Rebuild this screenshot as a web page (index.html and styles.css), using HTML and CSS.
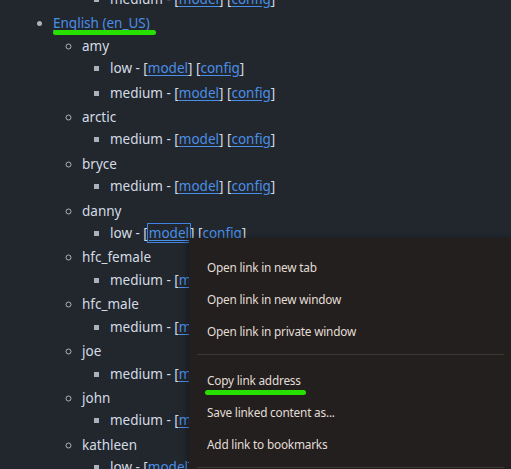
FILE: index.html
```html
<!DOCTYPE html>
<html>
<head>
<meta charset="utf-8">
<link rel="stylesheet" href="styles.css">
</head>
<body>
<div class="page">
  <ul class="l1">
    <li class="wrap">
      <ul class="l2">
        <li class="wrap">
          <ul class="l3">
            <li>medium - [<a href="#">model</a>] [<a href="#">config</a>]</li>
          </ul>
        </li>
      </ul>
    </li>
    <li><span class="mark"><a href="#">English (en_US)</a><span class="hl hl-lang"></span></span>
      <ul class="l2">
        <li>amy
          <ul class="l3">
            <li>low - [<a href="#">model</a>] [<a href="#">config</a>]</li>
            <li>medium - [<a href="#">model</a>] [<a href="#">config</a>]</li>
          </ul>
        </li>
        <li>arctic
          <ul class="l3">
            <li>medium - [<a href="#">model</a>] [<a href="#">config</a>]</li>
          </ul>
        </li>
        <li>bryce
          <ul class="l3">
            <li>medium - [<a href="#">model</a>] [<a href="#">config</a>]</li>
          </ul>
        </li>
        <li>danny
          <ul class="l3">
            <li>low - [<a href="#" class="focus">model</a>] [<a href="#">config</a>]</li>
          </ul>
        </li>
        <li>hfc_female
          <ul class="l3">
            <li>medium - [<a href="#">model</a>] [<a href="#">config</a>]</li>
          </ul>
        </li>
        <li>hfc_male
          <ul class="l3">
            <li>medium - [<a href="#">model</a>] [<a href="#">config</a>]</li>
          </ul>
        </li>
        <li>joe
          <ul class="l3">
            <li>medium - [<a href="#">model</a>] [<a href="#">config</a>]</li>
          </ul>
        </li>
        <li>john
          <ul class="l3">
            <li>medium - [<a href="#">model</a>] [<a href="#">config</a>]</li>
          </ul>
        </li>
        <li>kathleen
          <ul class="l3">
            <li>low - [<a href="#">model</a>] [<a href="#">config</a>]</li>
          </ul>
        </li>
      </ul>
    </li>
  </ul>

  <div class="menu">
    <div class="item">Open link in new tab</div>
    <div class="item">Open link in new window</div>
    <div class="item">Open link in private window</div>
    <div class="sep"></div>
    <div class="item"><span class="mark">Copy link address<span class="hl hl-copy"></span></span></div>
    <div class="item">Save linked content as...</div>
    <div class="item">Add link to bookmarks</div>
    <div class="sep"></div>
  </div>
</div>
</body>
</html>
```

FILE: styles.css
```css
html, body {
  margin: 0;
  padding: 0;
  background: #22272e;
  overflow: hidden;
}
body {
  width: 511px;
  height: 469px;
  font-family: "Noto Sans", "Open Sans", sans-serif;
  font-size: 13.5px;
  color: #d3dbe4;
}
.page {
  position: relative;
  width: 511px;
  height: 469px;
  overflow: hidden;
}
ul {
  margin: 0;
  padding-left: 29px;
}
.l1 {
  margin-top: -12px;
  padding-left: 53px;
  list-style: disc;
}
.l2 { list-style: circle; padding-left: 29px; }
.l3 { list-style: square; padding-left: 28px; }
li {
  line-height: 22.4px;
}
li + li { margin-top: 2px; }
li::marker { color: #aab3bd; }
li.wrap { list-style: none; }
a {
  color: #4a8fe7;
  text-decoration: underline;
  text-underline-offset: 2px;
}
.focus {
  outline: 1px solid #3f84e0;
  outline-offset: 0;
  padding: 0 1px;
}
.mark {
  position: relative;
}
.hl {
  position: absolute;
  height: 4.5px;
  border-radius: 2.5px;
  background: #27e000;
}
.hl-lang { left: 0; right: -6px; top: 16px; }
.hl-copy { left: -2px; right: -5px; top: 18px; }

.menu {
  position: absolute;
  left: 189px;
  top: 238px;
  width: 323px;
  height: 260px;
  background: #221f1e;
  padding-top: 13px;
  box-sizing: border-box;
  font-size: 11.8px;
  letter-spacing: -0.2px;
  color: #e2ddd6;
  box-shadow: -2px 0 6px rgba(0,0,0,0.35);
}
.item {
  height: 32px;
  line-height: 32px;
  padding-left: 18px;
}
.sep {
  height: 1px;
  background: #3b3735;
  margin: 7px 8px 9px 8px;
}
```
